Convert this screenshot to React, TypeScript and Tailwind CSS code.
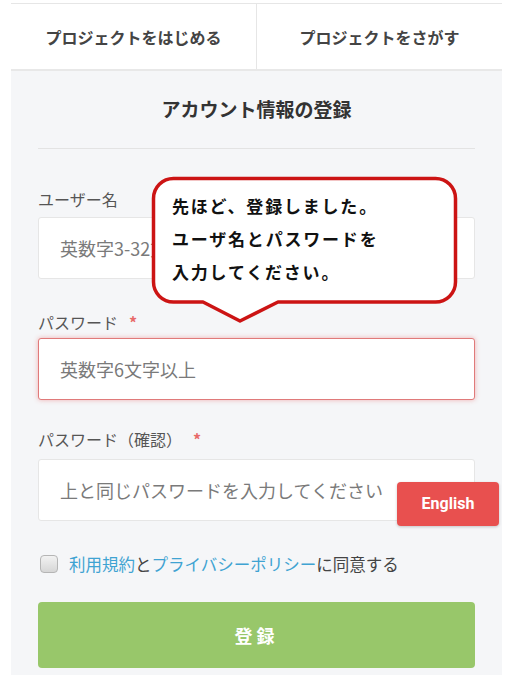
import React from "react";

const jp = "font-['Noto_Sans_CJK_JP','Noto_Sans',sans-serif]";

const Field = ({ label, required, placeholder, error, labelGap }: { label: string; required?: boolean; placeholder: string; error?: boolean; labelGap: string }) => (
  <>
    <div className="flex items-center h-[20px] text-[16px] text-[#555]">
      <span>{label}</span>
      {required ? <span className="ml-[11px] text-[#e86a6a] font-bold">*</span> : null}
    </div>
    <div
      className={`${labelGap} h-[62px] flex items-center pl-[21px] bg-white rounded-[3px] border text-[18px] text-[#7a7a7a] ${
        error ? "border-[#e07a7a] shadow-[0_0_5px_rgba(230,90,90,0.45)]" : "border-[#e6e6e6]"
      }`}
    >
      {placeholder}
    </div>
  </>
);

export default function App() {
  return (
    <div className={`${jp} relative w-[506px] h-[683px] bg-white overflow-hidden`}>
      <div className="ml-[11px] w-[491px] mt-[3px] border-t border-[#e6e6e6]">
        {/* tabs */}
        <div className="flex h-[67px] border-b-2 border-[#e8e8e8] bg-white">
          <div className="w-[246px] flex items-center justify-center border-r border-[#e6e6e6] text-[16px] font-bold text-[#444]">
            プロジェクトをはじめる
          </div>
          <div className="flex-1 flex items-center justify-center text-[16px] font-bold text-[#444]">
            プロジェクトをさがす
          </div>
        </div>
        {/* form panel */}
        <div className="bg-[#f5f6f8] px-[27px] pb-[7px]">
          <div className="h-[78px] flex items-center justify-center border-b border-[#e3e3e3] text-[19px] font-bold text-[#333]">
            アカウント情報の登録
          </div>
          <div className="mt-[40px]">
            <Field label="ユーザー名" placeholder="英数字3-32文字" labelGap="mt-[8px]" />
          </div>
          <div className="mt-[33px]">
            <Field label="パスワード" required placeholder="英数字6文字以上" error labelGap="mt-[6px]" />
          </div>
          <div className="mt-[29px]">
            <Field label="パスワード（確認）" required placeholder="上と同じパスワードを入力してください" labelGap="mt-[10px]" />
          </div>
          <div className="mt-[33px] h-[20px] flex items-center text-[16.5px] text-[#444]">
            <span className="ml-[2px] w-[18px] h-[18px] rounded-[4px] border border-[#b5b5b5] bg-gradient-to-b from-[#f2f2f2] to-[#d6d6d6]" />
            <span className="ml-[11px]">
              <span className="text-[#3fa3d2]">利用規約</span>と<span className="text-[#3fa3d2]">プライバシーポリシー</span>に同意する
            </span>
          </div>
          <div className="mt-[28px] h-[66px] rounded-[4px] bg-[#98c76a] flex items-center justify-center text-white text-[18px] font-bold tracking-[4px]">
            登録
          </div>
        </div>
      </div>

      {/* speech bubble */}
      <div className="absolute left-[150px] top-[175px] w-[310px] h-[150px]">
        <svg width="310" height="150" viewBox="0 0 310 150" className="absolute inset-0">
          <path
            d="M23.5 3.5 H285.5 A20 20 0 0 1 305.5 23.5 V107 A20 20 0 0 1 285.5 127 H128 L90 146 L53 127 H23.5 A20 20 0 0 1 3.5 107 V23.5 A20 20 0 0 1 23.5 3.5 Z"
            fill="#ffffff"
            stroke="#cc1414"
            strokeWidth="3.5"
            strokeLinejoin="round"
          />
        </svg>
        <div className="absolute left-[22px] top-[14px] text-[17px] leading-[33px] font-bold tracking-[1.8px] text-[#111]">
          <div>先ほど、登録しました。</div>
          <div>ユーザ名とパスワードを</div>
          <div>入力してください。</div>
        </div>
      </div>

      {/* language button */}
      <div className="absolute left-[397px] top-[482px] w-[102px] h-[44px] rounded-[4px] bg-[#e8504f] shadow-[0_1px_3px_rgba(0,0,0,0.2)] flex items-center justify-center text-white text-[16px] font-bold font-['Roboto','Liberation_Sans',sans-serif]">
        English
      </div>
    </div>
  );
}
